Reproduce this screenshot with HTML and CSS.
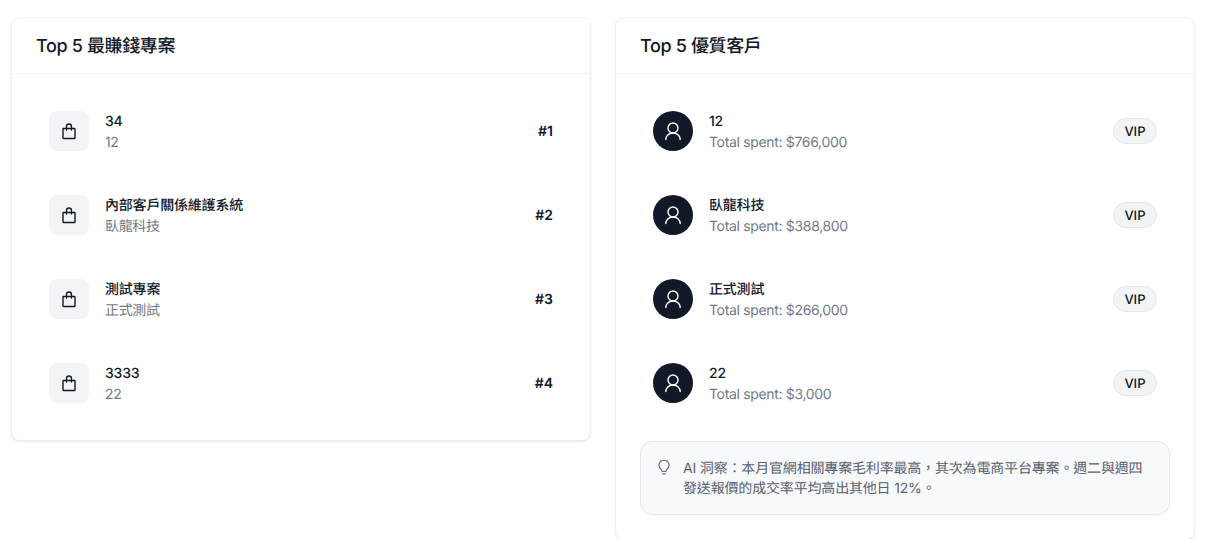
FILE: index.html
```html
<!DOCTYPE html>
<html lang="zh-Hant">
<head>
<meta charset="utf-8">
<title>Top 5</title>
<link rel="stylesheet" href="styles.css">
</head>
<body>
<svg class="defs" width="0" height="0" aria-hidden="true">
  <symbol id="bag" viewBox="0 0 20 20"><path d="M7.500 9V5.500a2.500 2.500 0 0 1 5 0V9M4.600 7.500h10.800a.6.6 0 0 1 .6.600v8.800a.6.6 0 0 1-.6.600H4.600a.6.6 0 0 1-.6-.6V8.100a.6.6 0 0 1 .6-.6Z"/></symbol>
  <symbol id="user" viewBox="0 0 20 20"><circle cx="10" cy="7" r="5"/><path d="M2.800 18.500c0-3.500 2.800-6.500 7.200-6.500s7.200 3 7.200 6.500"/></symbol>
</svg>
<main class="grid">
  <section class="card">
    <h2 class="card-title">Top 5 最賺錢專案</h2>
    <div class="card-body">
      <div class="row"><span class="thumb"><svg class="icon"><use href="#bag"/></svg></span><div class="info"><div class="name">34</div><div class="sub">12</div></div><span class="rank">#1</span></div>
      <div class="row"><span class="thumb"><svg class="icon"><use href="#bag"/></svg></span><div class="info"><div class="name">內部客戶關係維護系統</div><div class="sub">臥龍科技</div></div><span class="rank">#2</span></div>
      <div class="row"><span class="thumb"><svg class="icon"><use href="#bag"/></svg></span><div class="info"><div class="name">測試專案</div><div class="sub">正式測試</div></div><span class="rank">#3</span></div>
      <div class="row"><span class="thumb"><svg class="icon"><use href="#bag"/></svg></span><div class="info"><div class="name">3333</div><div class="sub">22</div></div><span class="rank">#4</span></div>
    </div>
  </section>
  <section class="card">
    <h2 class="card-title">Top 5 優質客戶</h2>
    <div class="card-body">
      <div class="row"><span class="avatar"><svg class="icon"><use href="#user"/></svg></span><div class="info"><div class="name">12</div><div class="sub">Total spent: $766,000</div></div><span class="badge">VIP</span></div>
      <div class="row"><span class="avatar"><svg class="icon"><use href="#user"/></svg></span><div class="info"><div class="name">臥龍科技</div><div class="sub">Total spent: $388,800</div></div><span class="badge">VIP</span></div>
      <div class="row"><span class="avatar"><svg class="icon"><use href="#user"/></svg></span><div class="info"><div class="name">正式測試</div><div class="sub">Total spent: $266,000</div></div><span class="badge">VIP</span></div>
      <div class="row"><span class="avatar"><svg class="icon"><use href="#user"/></svg></span><div class="info"><div class="name">22</div><div class="sub">Total spent: $3,000</div></div><span class="badge">VIP</span></div>
      <div class="insight">
        <svg class="bulb" viewBox="0 0 16 16"><path d="M5 11.500v-.6c0-.8-.5-1.300-1.200-2A5 5 0 1 1 10.200 8.900c-.7.7-1.200 1.200-1.200 2v.6ZM5.500 13.800h3"/></svg>
        <p class="insight-text">AI 洞察：本月官網相關專案毛利率最高，其次為電商平台專案。週二與週四發送報價的成交率平均高出其他日 12%。</p>
      </div>
    </div>
  </section>
</main>
</body>
</html>
```
FILE: styles.css
```css
* { box-sizing: border-box; }
html, body { margin: 0; background: #fff; }
body {
  font-family: Inter, "Noto Sans CJK TC", sans-serif;
  color: #111827;
  overflow: hidden;
  text-rendering: geometricPrecision;
}
.defs { position: absolute; }
.grid {
  display: grid;
  grid-template-columns: 578px 578px;
  column-gap: 26px;
  align-items: start;
  padding: 18px 0 0 12px;
}
.card {
  background: #fff;
  border-radius: 8px;
  box-shadow: 0 0 0 1px #eff0f2, 0 1px 3px rgba(17, 24, 39, .14), 0 1px 2px rgba(17, 24, 39, .08);
}
.card-title {
  margin: 0;
  height: 56px;
  padding: 2px 24px 0;
  display: flex;
  align-items: center;
  font-size: 18px;
  font-weight: 500;
  line-height: 28px;
  letter-spacing: -0.02em;
  border-bottom: 1px solid #f0f1f3;
}
.card-body {
  padding: 24px;
  display: flex;
  flex-direction: column;
  gap: 18px;
}
.row {
  display: flex;
  align-items: center;
  gap: 16px;
  padding: 13px;
}
.thumb, .avatar {
  flex: none;
  width: 40px;
  height: 40px;
  display: flex;
  align-items: center;
  justify-content: center;
}
.thumb { background: #f3f4f6; border-radius: 8px; color: #111827; }
.avatar { background: #111827; border-radius: 50%; color: #fff; }
.icon {
  width: 20px;
  height: 20px;
  fill: none;
  stroke: currentColor;
  stroke-width: 1.4;
  stroke-linecap: round;
  stroke-linejoin: round;
}
.info { flex: 1; min-width: 0; height: 40px; padding-top: 1px; }
.name { font-size: 14px; line-height: 20px; font-weight: 500; letter-spacing: -0.2px; }
.sub { font-size: 14px; line-height: 20px; color: #737985; margin-top: 1px; letter-spacing: -0.33px; }
.rank { font-size: 14px; font-weight: 600; line-height: 20px; margin-top: 2px; }
.badge {
  font-size: 13px;
  font-weight: 500;
  line-height: 20px;
  height: 26px;
  padding: 3px 10.5px 1px;
  border: 1px solid #e5e7eb;
  border-radius: 13px;
  background: #f3f4f6;
}
.insight {
  display: flex;
  gap: 10px;
  margin-top: 7px;
  padding: 16px;
  background: #f8f9fb;
  border: 1px solid #e5e7eb;
  border-radius: 12px;
}
.bulb {
  flex: none;
  width: 16px;
  height: 16px;
  margin-top: 2px;
  fill: none;
  stroke: #6b7280;
  stroke-width: 1.2;
  stroke-linecap: round;
  stroke-linejoin: round;
}
.insight-text {
  margin: 0;
  padding-top: 1px;
  height: 40px;
  font-size: 14px;
  line-height: 20px;
  letter-spacing: -0.17px;
  color: #596170;
}
```
